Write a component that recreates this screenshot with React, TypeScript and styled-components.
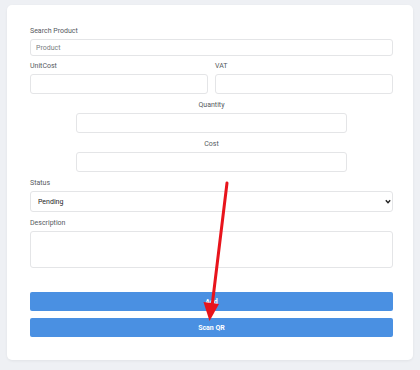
import React from "react";
import styled, { createGlobalStyle } from "styled-components";

const Global = createGlobalStyle`
  html, body { margin: 0; padding: 0; background: #eef0f4; }
  body { font-family: Roboto, "Liberation Sans", Arial, sans-serif; }
  * { box-sizing: border-box; }
`;

const Page = styled.div`
  position: relative;
  width: 420px;
  height: 370px;
  padding: 5px 7px 0 7px;
`;

const Card = styled.form`
  background: #ffffff;
  border-radius: 5px;
  box-shadow: 0 1px 3px rgba(0, 0, 0, 0.06);
  height: 355px;
  padding: 21px 20px 23px 23px;
  display: flex;
  flex-direction: column;
`;

const Group = styled.div<{ $center?: boolean; $narrow?: boolean; $mb?: number }>`
  display: flex;
  flex-direction: column;
  align-items: ${(p) => (p.$center ? "center" : "stretch")};
  margin-bottom: ${(p) => p.$mb ?? 6}px;
  ${(p) => (p.$narrow ? "width: 271px; align-self: center;" : "")}
`;

const Row = styled.div`
  display: grid;
  grid-template-columns: 1fr 1fr;
  gap: 7px;
  margin-bottom: 6px;
`;

const Label = styled.label`
  font-size: 7px;
  line-height: 10px;
  color: #555a60;
  margin-bottom: 3px;
`;

const Input = styled.input<{ $h?: number }>`
  display: block;
  width: 100%;
  height: ${(p) => p.$h ?? 20}px;
  border: 1px solid #e4e5e7;
  border-radius: 3px;
  background: #fff;
  font-family: inherit;
  font-size: 7px;
  padding: 0 5px;
  color: #222;
  outline: none;
  &::placeholder { color: #7a7d82; }
`;

const SelectWrap = styled.div`
  position: relative;
  width: 100%;
`;

const Select = styled.select`
  display: block;
  appearance: none;
  width: 100%;
  height: 21px;
  border: 1px solid #e4e5e7;
  border-radius: 3px;
  background: #fff;
  font-family: inherit;
  font-size: 7px;
  color: #1e1e1e;
  padding: 0 7px;
  outline: none;
`;

const Chevron = styled.svg`
  position: absolute;
  right: 2px;
  top: 8px;
  width: 6px;
  height: 5px;
  pointer-events: none;
`;

const TextArea = styled.textarea`
  display: block;
  width: 100%;
  height: 37px;
  border: 1px solid #e4e5e7;
  border-radius: 3px;
  resize: none;
  outline: none;
  font-family: inherit;
`;

const Buttons = styled.div`
  margin-top: 18px;
  display: flex;
  flex-direction: column;
  gap: 7px;
`;

const Button = styled.button`
  display: block;
  height: 19px;
  width: 100%;
  border: none;
  border-radius: 2px;
  background: #4a90e2;
  color: #ffffff;
  font-family: inherit;
  font-size: 7px;
  font-weight: 700;
  padding: 0;
`;

const Arrow = styled.svg`
  position: absolute;
  left: 0;
  top: 0;
  width: 420px;
  height: 370px;
  pointer-events: none;
`;

export default function App() {
  return (
    <>
      <Global />
      <Page>
        <Card onSubmit={(e) => e.preventDefault()}>
          <Group $mb={5}>
            <Label>Search Product</Label>
            <Input $h={17} placeholder="Product" />
          </Group>
          <Row>
            <Group $mb={0}>
              <Label>UnitCost</Label>
              <Input />
            </Group>
            <Group $mb={0}>
              <Label>VAT</Label>
              <Input />
            </Group>
          </Row>
          <Group $center $narrow>
            <Label>Quantity</Label>
            <Input />
          </Group>
          <Group $center $narrow>
            <Label>Cost</Label>
            <Input />
          </Group>
          <Group>
            <Label>Status</Label>
            <SelectWrap>
              <Select defaultValue="Pending">
                <option>Pending</option>
                <option>Completed</option>
              </Select>
              <Chevron viewBox="0 0 6 5">
                <path d="M0.8 1.2 L3 3.6 L5.2 1.2" stroke="#222" strokeWidth="1.4" fill="none" />
              </Chevron>
            </SelectWrap>
          </Group>
          <Group>
            <Label>Description</Label>
            <TextArea />
          </Group>
          <Buttons>
            <Button type="button">Add</Button>
            <Button type="button">Scan QR</Button>
          </Buttons>
        </Card>
        <Arrow viewBox="0 0 420 370">
          <line x1="227" y1="183" x2="212.3" y2="304" stroke="#e8141c" strokeWidth="3" strokeLinecap="round" />
          <polygon points="203.5,302 219,304 209.5,321" fill="#e8141c" />
        </Arrow>
      </Page>
    </>
  );
}
